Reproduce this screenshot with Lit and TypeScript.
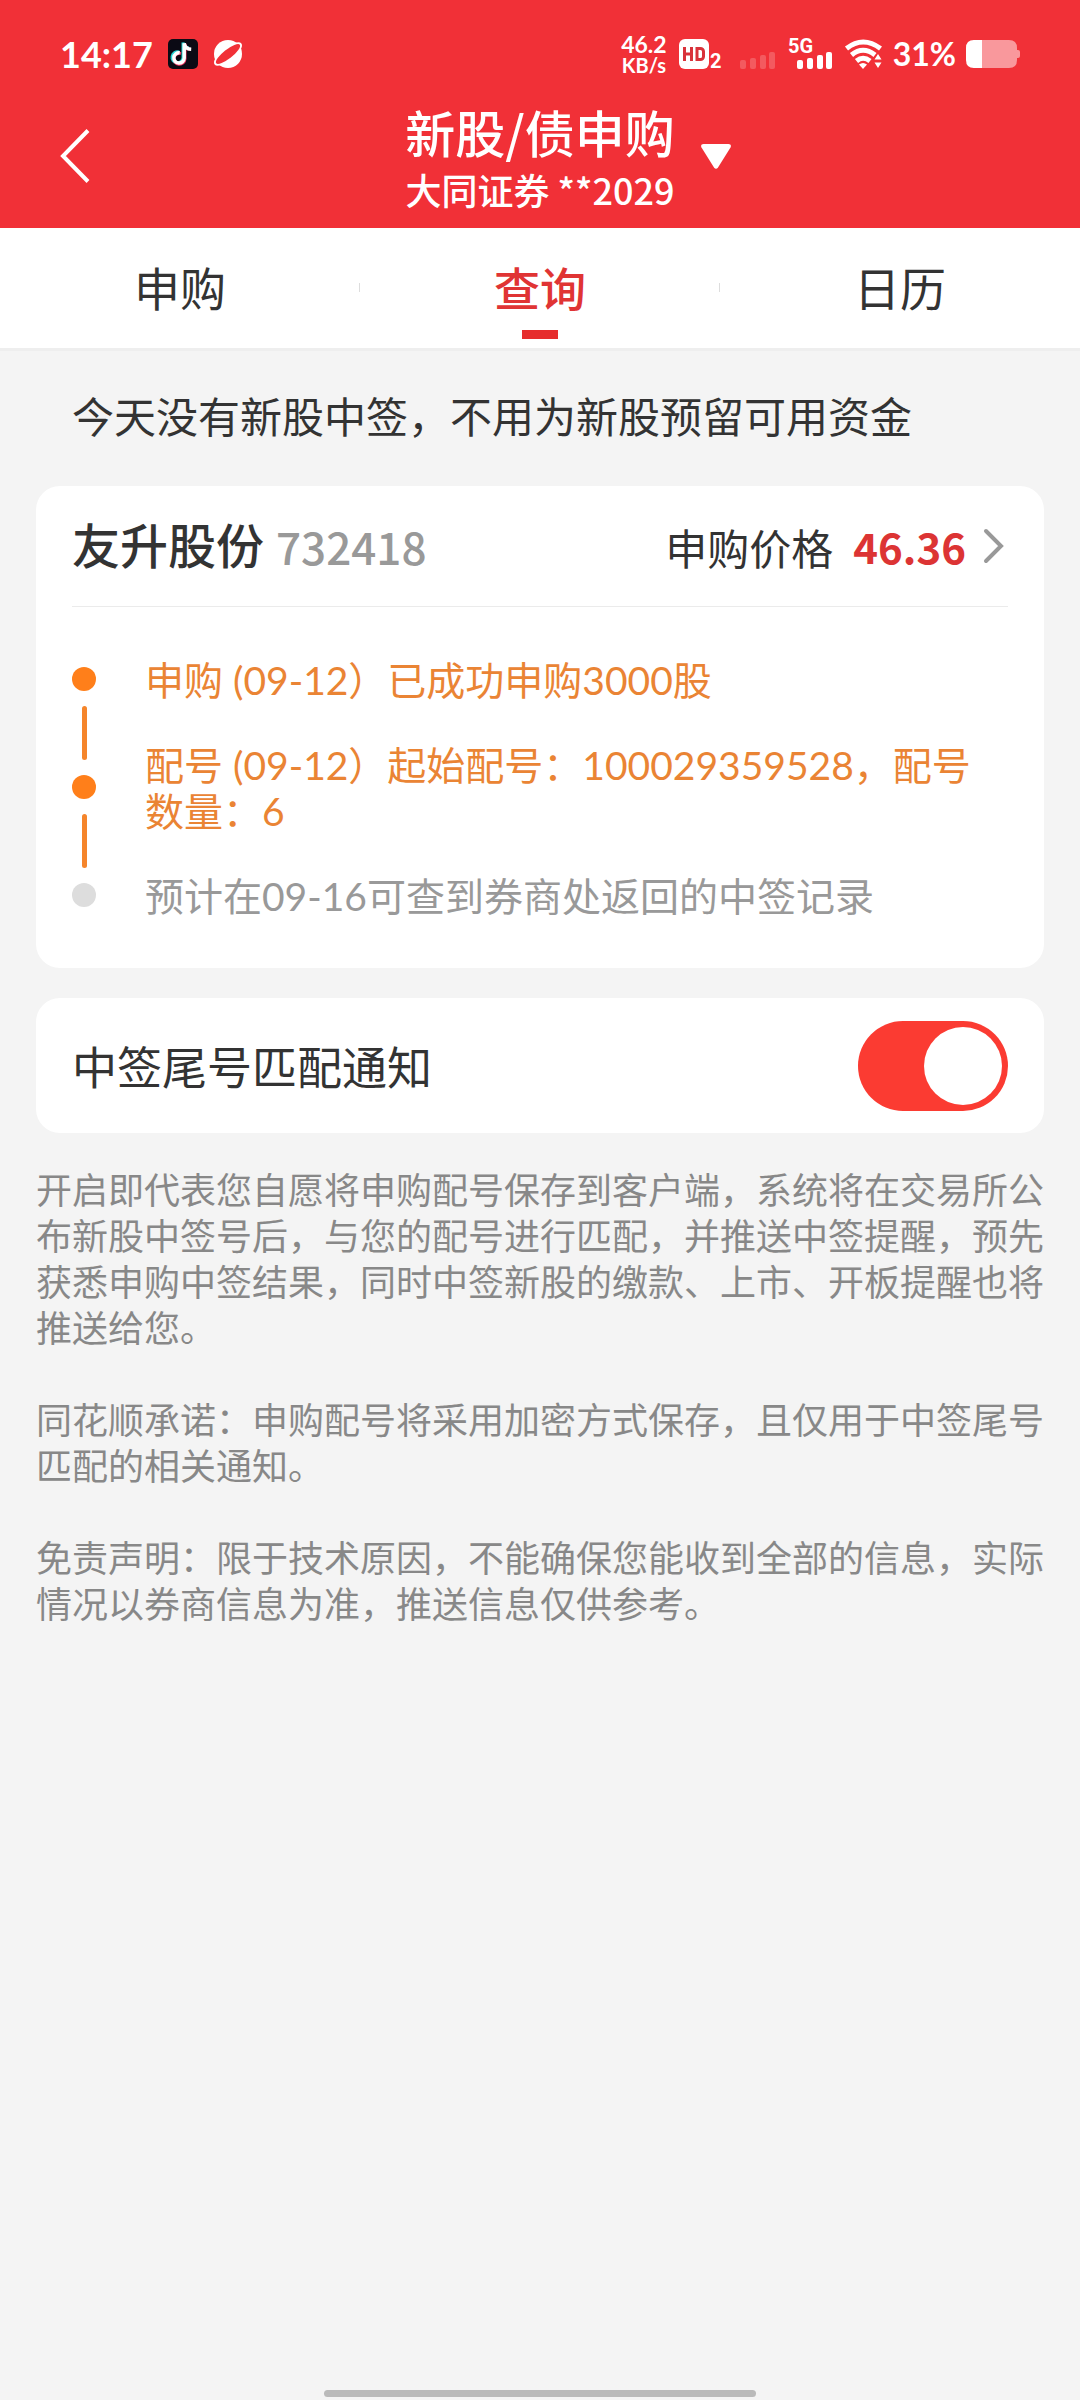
import { LitElement, html, css, svg } from "lit";
import { customElement, state } from "lit/decorators.js";
import { classMap } from "lit/directives/class-map.js";

const BAR_TOPS = [21, 19, 16, 13];
const bars = (left: number) =>
  BAR_TOPS.map(
    (top, i) => svg`<rect x=${left + [0, 10, 20, 29][i]} y=${top} width="6" height=${30 - top} rx="2"></rect>`
  );

@customElement("status-bar")
class StatusBar extends LitElement {
  static styles = css`
    :host {
      display: flex;
      align-items: center;
      height: 60px;
      padding: 24px 60px 0 60px;
      color: #fff;
      font-family: Lato, "Noto Sans CJK SC", sans-serif;
    }
    svg {
      display: block;
      flex: none;
      fill: #fff;
      overflow: visible;
    }
    .time {
      font-size: 36px;
      font-weight: 700;
      line-height: 40px;
    }
    .left,
    .right {
      display: flex;
      align-items: center;
    }
    .left {
      gap: 15px;
    }
    .right {
      margin-left: auto;
      gap: 10px;
    }
    .speed {
      display: flex;
      flex-direction: column;
      align-items: center;
      font-size: 23px;
      line-height: 22px;
      font-weight: 700;
      margin-right: 2px;
    }
    .unit {
      font-size: 20px;
      line-height: 20px;
    }
    .cells {
      display: flex;
      gap: 12px;
      margin: 0 2px 0 8px;
    }
    .percent {
      font-size: 32px;
      font-weight: 700;
      line-height: 40px;
    }
    .faint {
      opacity: 0.2;
    }
    .tag {
      font: 700 20px Roboto, "Noto Sans", sans-serif;
    }
    .hd {
      stroke: #d9323a;
      stroke-width: 3;
      fill: none;
    }
    .arc {
      fill: none;
      stroke: #fff;
      stroke-width: 5;
    }
  `;

  render() {
    return html`
      <div class="left">
        <span class="time">14:17</span>
        <svg width="30" height="30" viewBox="0 0 30 30" aria-hidden="true">
          <rect width="30" height="30" rx="5" fill="#0b0a14"></rect>
          <g fill="none" stroke-width="3">
            <path d="M13 13.500a5.500 5.500 0 1 0 4 5.500V4c.5 3.500 2.500 5.200 6 5.500" stroke="#25d5d5" transform="translate(-2 -.5)"></path>
            <path d="M13 13.500a5.500 5.500 0 1 0 4 5.500V4c.5 3.500 2.500 5.200 6 5.500" stroke="#f03560" transform="translate(0 1)"></path>
            <path d="M12.500 13.500a5.200 5.200 0 1 0 4.500 5.500V4c.5 3.500 3 5.800 7 6" stroke="#fff" stroke-width="3.500" transform="translate(-.8 .2)"></path>
          </g>
        </svg>
        <svg width="30" height="28" viewBox="0 0 30 28" aria-hidden="true">
          <circle cx="15" cy="14" r="14"></circle>
          <ellipse cx="15" cy="14" rx="17" ry="6.500" transform="rotate(-38 15 14)" fill="#fff"></ellipse>
          <ellipse cx="15" cy="14" rx="15" ry="4.500" transform="rotate(-38 15 14)" fill="#f13037"></ellipse>
        </svg>
      </div>
      <div class="right">
        <div class="speed"><span>46.2</span><span class="unit">KB/s</span></div>
        <svg width="43" height="30" viewBox="0 0 43 30" aria-label="HD 2">
          <rect width="30" height="30" rx="6"></rect>
          <path class="hd" d="M5.500 8v14M12.500 8v14M5.500 15h7M18 9.500h3.500a3 3 0 0 1 3 3v5a3 3 0 0 1-3 3H18z"></path>
          <text class="tag" x="31" y="29">2</text>
        </svg>
        <div class="cells">
          <svg class="faint" width="36" height="30" viewBox="0 0 36 30" aria-hidden="true">${bars(0)}</svg>
          <svg width="45" height="30" viewBox="0 0 45 30" aria-label="5G">
            <text class="tag" x="0" y="14">5G</text>
            ${bars(9)}
          </svg>
        </div>
        <svg width="38" height="30" viewBox="0 0 38 30" aria-hidden="true">
          <path class="arc" d="M1.500 9.500Q18 -3.500 35.500 9.500"></path>
          <path class="arc" d="M6.500 16Q18 6.500 30 16"></path>
          <path class="arc" d="M11.500 22Q18 16.500 25 22"></path>
          <path d="M14 25.500q4-3 8 0L18 30z"></path>
          <path d="M29.500 20.500 33 15l3.500 5.500zM29.500 23.500 33 29l3.500-5.500z"></path>
        </svg>
        <span class="percent">31%</span>
        <svg width="54" height="28" viewBox="0 0 54 28" aria-hidden="true">
          <path d="M7 0H43q8 0 8 8v2h1q2 0 2 2v4q0 2-2 2h-1v2q0 8-8 8H7z" fill="#f9989c"></path>
          <path d="M16 0H8Q0 0 0 8v12q0 8 8 8h8z"></path>
        </svg>
      </div>
    `;
  }
}

@customElement("progress-step")
class ProgressStep extends LitElement {
  static styles = css`
    :host {
      display: block;
      font-size: 39px;
      line-height: 46px;
      color: #ea8434;
    }
    :host([tone="pending"]) {
      color: #999;
    }
  `;
  render() {
    return html`<slot></slot>`;
  }
}

@customElement("app-root")
class AppRoot extends LitElement {
  @state() private tab = "查询";
  @state() private notify = true;

  static styles = css`
    :host {
      display: flex;
      flex-direction: column;
      min-height: 100vh;
      background: #f4f4f4;
      color: #333;
      font-family: Lato, "Noto Sans CJK SC", sans-serif;
    }
    button {
      border: 0;
      padding: 0;
      margin: 0;
      background: none;
      color: inherit;
      font: inherit;
    }
    a {
      color: inherit;
      text-decoration: none;
    }
    svg {
      display: block;
      flex: none;
    }
    .header {
      background: #f13037;
      color: #fff;
    }
    .title-row {
      display: grid;
      grid-template-columns: 1fr auto 1fr;
      align-items: center;
      height: 144px;
    }
    .back {
      justify-self: start;
      padding: 0 60px;
    }
    .title {
      margin: 0;
      padding: 17px 0 11px;
      text-align: center;
      font-weight: 500;
      font-family: "Noto Sans CJK SC", sans-serif;
    }
    .name {
      display: block;
      font-size: 50px;
      line-height: 60px;
    }
    .account {
      display: block;
      font-size: 36px;
      line-height: 56px;
    }
    .drop {
      justify-self: start;
      padding: 0 26px;
    }
    .tabs {
      display: flex;
      background: #fff;
      border-bottom: 3px solid #eee;
    }
    .tab {
      flex: 1;
      display: flex;
      flex-direction: column;
      align-items: center;
      font-size: 46px;
      line-height: 66px;
      padding: 28px 0 9px;
      gap: 8px;
      background: linear-gradient(#ddd, #ddd) right 55px / 1px 9px no-repeat;
    }
    .tab:last-child {
      background: none;
    }
    .tab::after {
      content: "";
      width: 36px;
      height: 9px;
    }
    .active {
      color: #e03434;
      font-weight: 500;
    }
    .active::after {
      background: #e62e2e;
    }
    .content {
      padding: 0 36px;
    }
    .notice {
      margin: 0;
      padding: 36px 36px 39px;
      font-size: 42px;
      line-height: 60px;
    }
    .card {
      background: #fff;
      border-radius: 24px;
      padding: 0 36px;
      margin-bottom: 30px;
    }
    .stock {
      display: flex;
      align-items: center;
      height: 120px;
      border-bottom: 1px solid #ebebeb;
    }
    .stock-name {
      margin: 0;
      font-size: 48px;
      line-height: 60px;
      font-weight: 500;
    }
    .number {
      font-family: "Noto Sans CJK SC", sans-serif;
      font-size: 44px;
      line-height: 60px;
      font-weight: 500;
    }
    .code {
      color: #999;
      margin-left: 12px;
    }
    .label {
      margin-left: auto;
      font-size: 42px;
    }
    .price {
      margin: 0 17px 0 20px;
      color: #dc3434;
      font-size: 42px;
      font-weight: 700;
    }
    .chevron {
      margin-right: 4px;
    }
    .progress {
      display: flex;
      gap: 49px;
      padding: 50px 12px 49px 0;
    }
    .rail {
      display: flex;
      flex-direction: column;
      align-items: center;
      gap: 15px;
      padding-top: 10px;
    }
    .dot {
      width: 24px;
      height: 24px;
      border-radius: 50%;
      background: #ff7f1a;
    }
    .dot.idle {
      background: #ddd;
    }
    .line {
      width: 5px;
      height: 54px;
      border-radius: 3px;
      background: #f5852b;
    }
    .steps {
      flex: 1;
      display: flex;
      flex-direction: column;
      gap: 39px;
    }
    .setting {
      display: flex;
      align-items: center;
      justify-content: space-between;
      height: 135px;
      font-size: 45px;
      margin-bottom: 34px;
    }
    .switch {
      appearance: none;
      display: flex;
      box-sizing: border-box;
      width: 150px;
      height: 90px;
      margin: 0;
      padding: 6px;
      border-radius: 45px;
      background: #ccc;
    }
    .switch::before {
      content: "";
      width: 78px;
      height: 78px;
      border-radius: 50%;
      background: #fff;
    }
    .switch:checked {
      background: #fb3b32;
      justify-content: flex-end;
    }
    .terms {
      font-size: 36px;
      line-height: 46px;
      color: #888;
    }
    .terms p {
      margin: 0 0 46px;
    }
    .home {
      width: 40%;
      height: 7px;
      margin: auto auto 3px;
      border-radius: 4px;
      background: #bababa;
    }
  `;

  render() {
    return html`
      <header class="header">
        <status-bar></status-bar>
        <div class="title-row">
          <button class="back" aria-label="返回">
            <svg width="30" height="54" viewBox="0 0 30 54" fill="none" stroke="#fff" stroke-width="4">
              <path d="M28 1.500 3 27l25 25.500"></path>
            </svg>
          </button>
          <h1 class="title">
            <span class="name">新股/债申购</span>
            <span class="account">大同证券 **2029</span>
          </h1>
          <button class="drop" aria-label="切换账户">
            <svg width="30" height="25" viewBox="0 0 30 25" fill="#fff">
              <path d="M2.500 0h25q3.500 0 2 3.500L17 23.500q-2 2.500-4 0L.5 3.500Q-1 0 2.500 0z"></path>
            </svg>
          </button>
        </div>
      </header>
      <nav class="tabs">
        ${["申购", "查询", "日历"].map(
          (t) => html`<button
            class=${classMap({ tab: true, active: t === this.tab })}
            @click=${() => (this.tab = t)}
          >${t}</button>`
        )}
      </nav>
      <main class="content">
        <p class="notice">今天没有新股中签，不用为新股预留可用资金</p>
        <section class="card">
          <a class="stock" href="#detail">
            <h2 class="stock-name">友升股份</h2>
            <span class="number code">732418</span>
            <span class="label">申购价格</span>
            <span class="number price">46.36</span>
            <svg class="chevron" width="21" height="36" viewBox="0 0 21 36" fill="none" stroke="#999" stroke-width="4" stroke-linecap="round">
              <path d="M3 3l15 15L3 33"></path>
            </svg>
          </a>
          <div class="progress">
            <div class="rail">
              <i class="dot"></i><i class="line"></i><i class="dot"></i><i class="line"></i><i class="dot idle"></i>
            </div>
            <div class="steps">
              <progress-step>申购 (09-12）已成功申购3000股</progress-step>
              <progress-step>配号 (09-12）起始配号：100029359528，配号数量：6</progress-step>
              <progress-step tone="pending">预计在09-16可查到券商处返回的中签记录</progress-step>
            </div>
          </div>
        </section>
        <section class="card setting">
          <label for="notify">中签尾号匹配通知</label>
          <input
            class="switch"
            id="notify"
            type="checkbox"
            role="switch"
            .checked=${this.notify}
            @change=${(e: Event) => (this.notify = (e.target as HTMLInputElement).checked)}
          />
        </section>
        <div class="terms">
          <p>开启即代表您自愿将申购配号保存到客户端，系统将在交易所公布新股中签号后，与您的配号进行匹配，并推送中签提醒，预先获悉申购中签结果，同时中签新股的缴款、上市、开板提醒也将推送给您。</p>
          <p>同花顺承诺：申购配号将采用加密方式保存，且仅用于中签尾号匹配的相关通知。</p>
          <p>免责声明：限于技术原因，不能确保您能收到全部的信息，实际情况以券商信息为准，推送信息仅供参考。</p>
        </div>
      </main>
      <div class="home"></div>
    `;
  }
}
